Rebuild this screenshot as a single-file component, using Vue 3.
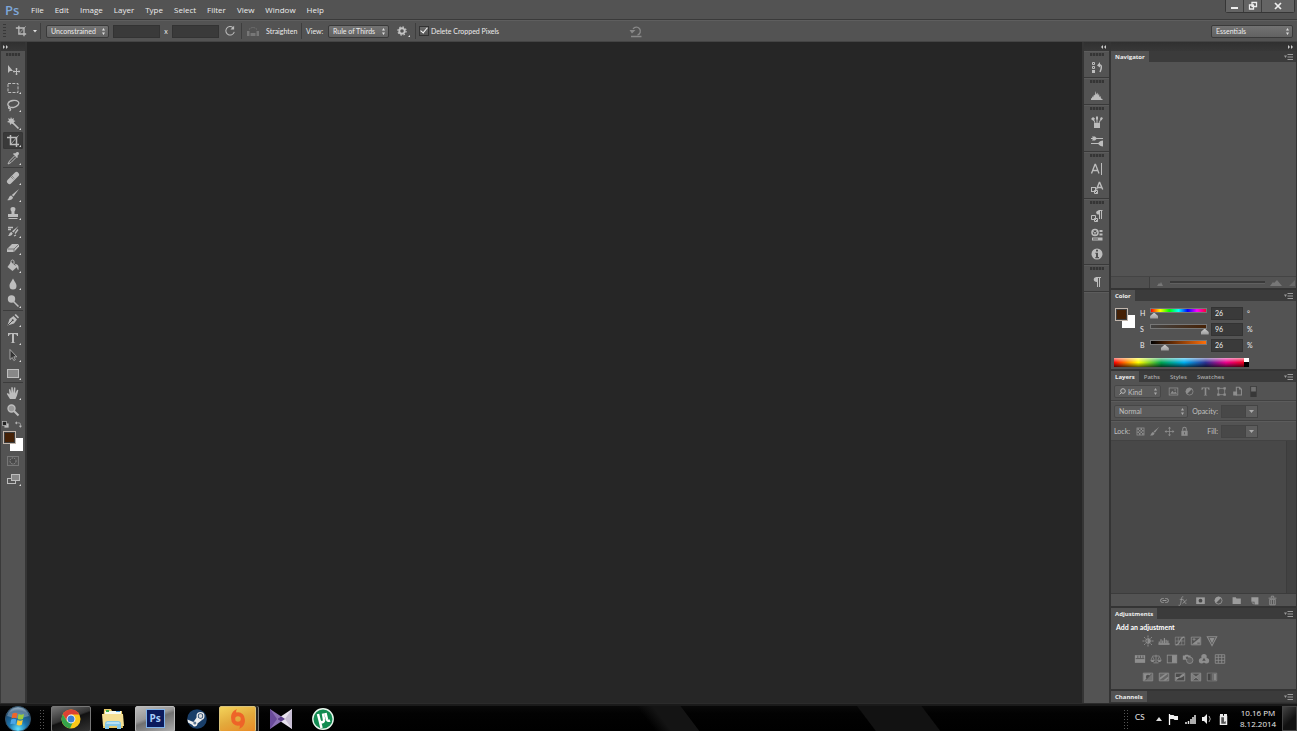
<script setup>
import { ref } from 'vue'

const menus = ['File', 'Edit', 'Image', 'Layer', 'Type', 'Select', 'Filter', 'View', 'Window', 'Help']

const icons = {
  move: '<path d="M2 2v8l2-2h3z" fill="currentColor"/><path d="M10.500 5v7M7 8.500h7M9.500 6h2M9.500 11h2M8 7.500v2M13 7.500v2" stroke="currentColor" fill="none"/>',
  marquee: '<rect x="2" y="2.500" width="10" height="9" fill="none" stroke="currentColor" stroke-dasharray="3 1.300"/>',
  lasso: '<path d="M4 9C0 7 2 3 7 2.500s7 2 5 4.500-6 3-8 2c-1.500-.8-2 1.200-.5 1.500S5 12 3.500 13" fill="none" stroke="currentColor" stroke-width="1.300"/>',
  wand: '<path d="M5 1l1 2 2-1-.5 2.200L9.500 5 7.600 6.200 8 8.500 5.700 7.500 4 9l-.2-2.300L1 6l2-1.500L2 2.300l2.300.7z" fill="currentColor"/><path d="M6.500 6.500l6 6" stroke="currentColor" stroke-width="1.700"/>',
  crop: '<path d="M4.500 1v9.500H13M1 3.500h9.500V13" fill="none" stroke="currentColor" stroke-width="1.500"/><path d="M4.500 10.500l8-9" stroke="currentColor" stroke-width=".8"/>',
  dropper: '<path d="M9 2.500l1.500-1.300c2-.8 3 .8 2.200 2.300L11.300 5l.7 1-1 1-4-4 1-1z" fill="currentColor"/><path d="M8.500 5l-5 5-1.500 3 3-1.500 5-5" fill="none" stroke="currentColor"/>',
  heal: '<path d="M3.500 10.500l7-7" stroke="currentColor" stroke-width="5" stroke-linecap="round"/><path d="M6 5l3 3M5 6l3 3" stroke="#555" stroke-width=".8" stroke-dasharray="1 1"/>',
  brush: '<path d="M13 1L7.500 8.500 5.800 7z" fill="currentColor"/><path d="M5.200 7.500L7 9.200C6.500 12 4 12.500 1 12c2-.5 1.500-4 4.200-4.500z" fill="currentColor"/>',
  stamp: '<path d="M7 1c3.200 0 2.800 3 1.500 4.500V8H12v3H2V8h3.500V5.500C4.200 4 3.800 1 7 1zM2.500 12h9v1h-9z" fill="currentColor"/>',
  history: '<path d="M12.500 2L7.500 8.500 6 7.200zM5.500 8l1.200 1.200C6 11.500 4.500 12 2 12c1.500-1 1-3.500 3.500-4z" fill="currentColor"/><path d="M2 3.500h5M2 5.500h3M9 9.500l3-4M8 12l2-1" stroke="currentColor" stroke-width="1.300"/>',
  eraser: '<path d="M1 8l5-5h7v2.500L8 11H1z" fill="currentColor"/><path d="M1.500 8H8l5-5M8 8v3" stroke="#666" fill="none" stroke-width=".8"/>',
  bucket: '<path d="M5 3l6 5-4.500 4-5-4z" fill="currentColor"/><path d="M5 7V2.500c0-2 3-2 3 0V5" fill="none" stroke="currentColor"/><path d="M9 5c3 0 4 2 3.500 6-1.500 0-1-3-2.500-3z" fill="currentColor"/>',
  drop: '<path d="M7 1.500c2 4 3.500 5 3.500 7.500a3.500 3.500 0 0 1-7 0C3.500 6.500 5 5.500 7 1.500z" fill="currentColor"/>',
  dodge: '<circle cx="5.500" cy="5" r="3.700" fill="currentColor"/><path d="M7.500 7.500l5 5" stroke="currentColor" stroke-width="1.500"/>',
  pen: '<path d="M1.500 12.500L3.500 6l4-3 3.500 3.500-3 4zM8.500 2l1.300-1L13 4.200 12 5.500z" fill="currentColor"/><path d="M2 12l4-4" stroke="#444" stroke-width=".9"/><circle cx="6.700" cy="7.200" r="1" fill="#444"/>',
  type: '<path d="M2 2h10v3h-1c0-1.300-.7-2-3-2v8.200l1.500.8h-5L6 11.200V3c-2.300 0-3 .7-3 2H2z" fill="currentColor"/>',
  select: '<path d="M4 1.500v10l2.300-2 1.500 3 1.500-.8-1.500-2.900h3z" fill="#333" stroke="currentColor" stroke-width=".8"/>',
  rect: '<rect x="1.500" y="3.500" width="11" height="8" fill="#888" stroke="currentColor"/>',
  hand: '<path d="M4 13L1 8.200C.5 7 2 6.500 3.500 8.500L3 4c0-1.200 1.300-1.200 1.500 0L5.300 7V2c0-1.200 1.400-1.200 1.500 0l.4 5 .8-5c.2-1.200 1.500-1 1.400.2L9.200 7.500l1.600-3.200c.6-1 1.700-.5 1.400.5L11 9.500 9.500 13z" fill="currentColor"/>',
  zoom: '<circle cx="5.500" cy="5.500" r="3.500" fill="#999" stroke="currentColor" stroke-width="1.400"/><path d="M8 8l4.500 4.500" stroke="currentColor" stroke-width="2"/>',
  mini: '<rect x="5" y="5" width="6" height="6" fill="#bbb"/><rect x="2" y="2" width="6" height="6" fill="#222" stroke="#bbb"/>',
  swap: '<path d="M4 4.500h4q2 0 2 2V10" fill="none" stroke="currentColor"/><path d="M1.500 4.500l3-2.500v5zM7.500 9h5L10 12z" fill="currentColor"/>',
  mask: '<rect x="1.500" y="2.500" width="11" height="9" fill="none" stroke="#777"/><circle cx="7" cy="7" r="3" fill="#4a4a4a" stroke="#929292" stroke-dasharray="1.500 1"/>',
  screen: '<rect x="1.500" y="6.500" width="8" height="5" fill="#555" stroke="currentColor"/><rect x="5.500" y="2.500" width="8" height="6" fill="#888" stroke="currentColor"/>',
  rotate: '<path d="M10.500 3A5 5 0 1 0 12 8" fill="none" stroke="currentColor" stroke-width="1.200"/><path d="M11.800.8v4.400H7.500z" fill="currentColor"/>',
  level: '<path d="M1 7h2.500v5H1zM10.500 7H13v5h-2.500zM4.500 9h5v3h-5z" fill="#777"/><path d="M3 5.500q4-4 8 0" stroke="#777" fill="none" stroke-dasharray="1.500 1"/>',
  gear: '<circle cx="7" cy="7" r="3.200" fill="none" stroke="currentColor" stroke-width="2.200"/><circle cx="7" cy="7" r="4.800" fill="none" stroke="currentColor" stroke-width="1.400" stroke-dasharray="1.800 1.970"/>',
  undo: '<path d="M4 5a4 4 0 1 1 4.500 6M2 12.500h10.500" fill="none" stroke="currentColor" stroke-width="1.300"/><path d="M.5 6h6L3 9.500z" fill="currentColor"/>',
  histPanel: '<path d="M2.500 1.500h2v2h-2zM2.500 5.500h2v2h-2z" fill="none" stroke="currentColor"/><path d="M2 9h3v3H2z" fill="currentColor"/><path d="M8.500 4c3.500-1 3.500 3 1.500 7" fill="none" stroke="currentColor" stroke-width="1.500"/><path d="M7 4.500L10 1v5.500z" fill="currentColor"/>',
  histogram: '<path d="M1 12v-1.500L2 10V8l1 1.500 1-3 1 1 .5-4.500 1 3.500 1-2 .5 3 1-2 .5 3.500 1-1 .5 2.500 1.500.5V12z" fill="currentColor"/>',
  brushes: '<path d="M4 8h6v5H4z" fill="currentColor"/><path d="M5 8L3 3M7 8V3M9 8l2-4" stroke="currentColor"/><path d="M1 4l2-2 2 1.500L3.500 6zM6 1.500h2v3H6zM10 4l1-2 2 1-1.500 2.500z" fill="currentColor"/>',
  brushPre: '<path d="M1 4.500h12M1 9.500h12" stroke="currentColor"/><path d="M2 2.500h3l2 2-2 2H2l1-2zM8 9.500c1-2 3-3 5-3v6c-2 0-4-1-5-3z" fill="currentColor"/>',
  char: '<path d="M1.500 11.500L5 2.500h.5l3.500 9M3 8.500h4.700" fill="none" stroke="currentColor" stroke-width="1.300"/><path d="M11.500 1v12" stroke="currentColor" stroke-width="1"/>',
  charStyle: '<path d="M6.500 8.500L9.300 1.500h.4l3 7M7.500 6.500h4" fill="none" stroke="currentColor" stroke-width="1.400"/><rect x="1.500" y="6.500" width="4" height="4" fill="none" stroke="currentColor"/><path d="M4.500 9.500h3v3h-3v-3l3 3" fill="none" stroke="currentColor"/>',
  paraStyle: '<path d="M8.500 1.500h4M9.500 2v8M11.500 2v8" stroke="currentColor"/><path d="M9.500 1.500c-4.500-.5-4.500 4.500 0 4z" fill="currentColor"/><path d="M1.500 6.500h4v4h-4zM4.500 9.500h3v3h-3v-3l3 3" fill="none" stroke="currentColor"/>',
  library: '<circle cx="5" cy="4.500" r="3" fill="none" stroke="currentColor" stroke-width="1.500"/><path d="M5 4v3M3 3.500l2 1 2-1" stroke="currentColor"/><path d="M9.500 2h3v2h-3zM9.500 5.500h3v2h-3z" fill="currentColor"/><rect x="2" y="9.500" width="10.500" height="3" fill="currentColor"/><path d="M3 11h5" stroke="#555"/>',
  info: '<circle cx="7" cy="7" r="5.500" fill="currentColor"/><path d="M6 2.800h2v1.800H6zM5.300 5.700H8v4.400h1v1.100H5.300v-1.100H6V6.800h-.7z" fill="#505050"/>',
  para: '<path d="M6 2.500h5M7.500 2v10M9.500 2v10" stroke="currentColor"/><path d="M7.500 2c-5-.5-5 5.500 0 5z" fill="currentColor"/>',
  image: '<rect x="1.500" y="2.500" width="11" height="9" fill="none" stroke="currentColor"/><path d="M3 10l2.500-4 2 2.500 2-1.500 2 3z" fill="currentColor"/><circle cx="9" cy="5" r="1" fill="currentColor"/>',
  half: '<circle cx="7" cy="7" r="4.500" fill="none" stroke="currentColor"/><path d="M3.800 10.200a4.500 4.500 0 0 1 6.400-6.400z" fill="currentColor"/>',
  shape: '<path d="M3 3h8v8H3z" fill="none" stroke="currentColor"/><path d="M1.500 1.500h3v3h-3zM9.500 1.500h3v3h-3zM1.500 9.500h3v3h-3zM9.500 9.500h3v3h-3z" fill="currentColor"/>',
  smart: '<path d="M5.500 1.500h4l2.500 2.500v7.500H5.500z" fill="none" stroke="currentColor" stroke-width="1.300"/><path d="M9 1v3.500h3.500zM1.500 7h5v5h-5z" fill="currentColor"/>',
  toggle: '<rect x="3" y="0" width="8" height="14" fill="#383838"/><rect x="4" y="1" width="6" height="6" fill="#707070"/>',
  pixels: '<rect x="2.500" y="2.500" width="9" height="9" fill="none" stroke="currentColor"/><path d="M3 3h2v2H3zM7 3h2v2H7zM5 5h2v2H5zM9 5h2v2H9zM3 7h2v2H3zM7 7h2v2H7zM5 9h2v2H5zM9 9h2v2H9z" fill="currentColor"/>',
  cross: '<path d="M7 2v10M2 7h10" stroke="currentColor"/><path d="M7 .8l2 2.400H5zM7 13.200l2-2.400H5zM.8 7l2.400-2v4zM13.200 7l-2.400-2v4z" fill="currentColor"/>',
  lock: '<rect x="3" y="6" width="8" height="6.500" fill="currentColor"/><path d="M4.700 6V4a2.300 2.300 0 0 1 4.600 0v2" fill="none" stroke="currentColor" stroke-width="1.300"/><path d="M7 8v2.500" stroke="#505050"/>',
  link: '<path d="M6 9.500H4.500a2.300 2.300 0 0 1 0-5H6M8 4.500h1.500a2.300 2.300 0 0 1 0 5H8M4.500 7h5" fill="none" stroke="currentColor" stroke-width="1.200"/>',
  fx: '<path d="M2 13c2 1 2.500-1 3-4l.8-4.500c.4-2 1-2.700 2.200-2.200M3.500 5.500H8M7.500 6.500c2-1 2 5.500 4.500 4M12.500 6L7 11" fill="none" stroke="currentColor"/>',
  maskIcon: '<path d="M1.500 3h11v8.500h-11z" fill="currentColor"/><circle cx="7" cy="7.200" r="2.400" fill="#484848"/>',
  folder: '<path d="M2 3h4l1 1.500h5.500v7H2z" fill="currentColor"/>',
  page: '<path d="M3 3h9v9H7V8.500H3z" fill="currentColor"/><path d="M3 9.500h3V12z" fill="currentColor"/>',
  trash: '<path d="M3.500 5.500h7v7h-7zM2 4h10M5.500 3.500v-2h3v2M5.500 6v6M8.500 6v6" fill="none" stroke="currentColor"/>',
  sun: '<circle cx="7" cy="7" r="2.500" fill="none" stroke="currentColor" stroke-width="1.200"/><path d="M7 4.500a2.500 2.500 0 0 1 0 5zM7 .5v2.500M7 11v2.500M.5 7H3M11 7h2.500M2.400 2.400l1.700 1.700M9.900 9.900l1.700 1.700M11.600 2.400L9.900 4.100M4.100 9.900l-1.700 1.700" fill="currentColor" stroke="currentColor" stroke-width="1.100"/>',
  levels: '<path d="M.5 11.500h13v-2h-13z" fill="currentColor"/><path d="M1.500 10V7.500M3.500 10V5M5.500 10V6.500M7.500 10V3.500M9.500 10V5.500M11.500 10V6.500" stroke="currentColor" stroke-width="1.400"/>',
  curves: '<path d="M1.500 2.500h11v9h-11zM5 2.500v9M9 2.500v9M1.500 7h11" fill="none" stroke="currentColor" stroke-width=".7"/><path d="M2 11.500c6 0 4-9 10-9" fill="none" stroke="currentColor" stroke-width="1.300"/>',
  exposure: '<path d="M1.500 2.500h11v9h-11z" fill="none" stroke="currentColor"/><path d="M2 11L12 3v8z" fill="currentColor"/><path d="M3 5h3.500M4.700 3.300v3.500" stroke="currentColor"/><path d="M8.500 9.500h3" stroke="#505050"/>',
  vibrance: '<path d="M1.500 2h11L7 12.500z" fill="none" stroke="currentColor" stroke-width="1.200"/><path d="M4 3.500h6L7 9.500z" fill="currentColor"/>',
  hue: '<path d="M1 2.500h12v9H1z" fill="currentColor"/><path d="M2 6.500h10M4.500 3v3M7.500 3v3M10.500 3v3" stroke="#555"/>',
  balance: '<path d="M7 2v9M3 3.500h8M4 11.500h6" stroke="currentColor"/><path d="M3 4L1 8.500h4zM11 4L9 8.500h4z" fill="none" stroke="currentColor" stroke-width=".8"/><path d="M.5 8.500h5L4 10.500H2zM8.500 8.500h5l-1.500 2h-2z" fill="currentColor"/>',
  bw: '<rect x="1.500" y="2.500" width="11" height="9" fill="none" stroke="currentColor"/><path d="M7 2.500h5.500v9H7z" fill="currentColor"/>',
  photo: '<path d="M1 3h2l1-1h3l1 1h2v5H1z" fill="currentColor"/><circle cx="9" cy="8.500" r="3.800" fill="#626262" stroke="currentColor"/><circle cx="6" cy="5.500" r="1.500" fill="#555"/>',
  mixer: '<circle cx="7" cy="4.500" r="3.200" fill="currentColor"/><circle cx="4.200" cy="9" r="3.200" fill="currentColor"/><circle cx="9.800" cy="9" r="3.200" fill="currentColor"/><path d="M7 5.500L9 9H5z" fill="#505050"/>',
  grid: '<path d="M1.500 2h11v10h-11zM5 2v10M9 2v10M1.500 5h11M1.500 8.500h11" fill="none" stroke="currentColor"/>',
  invert: '<path d="M1.500 2.500h11v9h-11z" fill="none" stroke="currentColor"/><path d="M2 3h9L3 11H2z" fill="currentColor"/><circle cx="7" cy="7" r="2.500" fill="#505050"/><path d="M12 11.500H4L12 3z" fill="currentColor" opacity=".55"/>',
  poster: '<path d="M1.500 2.500h11v9h-11z" fill="#666" stroke="currentColor"/><path d="M2 8l7-5h3L2 10.500zM6 11l6-4.500V9l-3 2z" fill="currentColor"/>',
  thresh: '<path d="M1.500 2.500h11v9h-11z" fill="#4b4b4b" stroke="currentColor"/><path d="M2 7h4l3-3 3-1v2.500L8 8H6l-4 3z" fill="currentColor"/>',
  selColor: '<path d="M1.500 2.500h11v9h-11z" fill="none" stroke="currentColor"/><path d="M1.500 2.500L7 7l5.500-4.500v9L7 7l-5.500 4.500z" fill="currentColor" opacity=".7"/><path d="M2 3l10 8.500M12 3L2 11.500" stroke="currentColor"/>',
  gradMap: '<path d="M1.500 2.500h11v9h-11z" fill="#444" stroke="currentColor" stroke-width=".8"/><path d="M5 3h2v8H5z" fill="#5a5a5a"/><path d="M7 3h2v8H7z" fill="#707070"/><path d="M9 3h3v8H9z" fill="#888"/>',
}

const toolGroups = [
  { cls: 'six', tools: [['move', 'Move'], ['marquee', 'Marquee'], ['lasso', 'Lasso'], ['wand', 'Magic wand'], ['crop', 'Crop'], ['dropper', 'Eyedropper']] },
  { cls: 'eight', tools: [['heal', 'Healing brush'], ['brush', 'Brush'], ['stamp', 'Clone stamp'], ['history', 'History brush'], ['eraser', 'Eraser'], ['bucket', 'Paint bucket'], ['drop', 'Blur'], ['dodge', 'Dodge']] },
  { cls: 'four', tools: [['pen', 'Pen'], ['type', 'Type'], ['select', 'Path selection'], ['rect', 'Rectangle']] },
  { cls: 'two', tools: [['hand', 'Hand'], ['zoom', 'Zoom']] },
]
const noFlyout = ['move', 'zoom']
const activeTool = ref('crop')

const tray = [['histPanel'], ['histogram'], ['brushes', 'brushPre'], ['char', 'charStyle'], ['paraStyle', 'library', 'info'], ['para']]

const deleteCropped = ref(true)
const channels = ref([
  { id: 'h', label: 'H', max: 360, value: 26, unit: '°' },
  { id: 's', label: 'S', max: 100, value: 96, unit: '%' },
  { id: 'b', label: 'B', max: 100, value: 26, unit: '%' },
])
const layerTabs = ['Layers', 'Paths', 'Styles', 'Swatches']
const filters = ['image', 'half', 'type', 'shape', 'smart', 'toggle']
const locks = ['pixels', 'brush', 'cross', 'lock']
const layerActions = ['link', 'fx', 'maskIcon', 'half', 'folder', 'page', 'trash']
const adjustments = [
  ['sun', 'levels', 'curves', 'exposure', 'vibrance'],
  ['hue', 'balance', 'bw', 'photo', 'mixer', 'grid'],
  ['invert', 'poster', 'thresh', 'selColor', 'gradMap'],
]
</script>

<template>
  <div class="app">
    <header class="menubar">
      <span class="logo">Ps</span>
      <nav class="menus">
        <button v-for="m in menus" :key="m" class="menu">{{ m }}</button>
      </nav>
      <div class="window-buttons">
        <button aria-label="Minimize"><svg width="10" height="10"><path d="M1 6h7v2H1z" fill="#eee" /></svg></button>
        <button aria-label="Restore"><svg width="10" height="10"><path d="M4 1.500h4.500v4H4zM1.500 4h4v4h-4z" fill="#555" stroke="#eee" stroke-width="1.300" /></svg></button>
        <button class="close" aria-label="Close"><svg width="10" height="10"><path d="M2 2l6 6M8 2L2 8" stroke="#eee" stroke-width="1.700" /></svg></button>
      </div>
    </header>

    <section class="options">
      <span class="vgrip"></span>
      <button class="preset" aria-label="Crop presets">
        <svg width="12" height="12" viewBox="0 0 14 14" v-html="icons.crop"></svg>
        <svg width="4" height="3"><path d="M0 0h4L2 2.500z" fill="#ddd" /></svg>
      </button>
      <i class="sep"></i>
      <span class="dropdown ratio">
        <select aria-label="Aspect ratio"><option>Unconstrained</option></select>
        <svg width="5" height="7"><path d="M1 2.500L2.500 0 4 2.500zM1 4.500L2.500 7 4 4.500z" fill="#ddd" /></svg>
      </span>
      <input class="field" type="text" aria-label="Width" />
      <span class="times">x</span>
      <input class="field" type="text" aria-label="Height" />
      <button class="rotate" aria-label="Rotate"><svg width="12" height="12" viewBox="0 0 14 14" v-html="icons.rotate"></svg></button>
      <i class="sep"></i>
      <button class="straighten"><svg width="14" height="14" v-html="icons.level"></svg><span>Straighten</span></button>
      <i class="sep"></i>
      <label class="view" for="overlay">View:</label>
      <span class="dropdown overlay">
        <select id="overlay"><option>Rule of Thirds</option></select>
        <svg width="5" height="7"><path d="M1 2.500L2.500 0 4 2.500zM1 4.500L2.500 7 4 4.500z" fill="#ddd" /></svg>
      </span>
      <button class="gear flyout" aria-label="Crop options"><svg width="12" height="12" viewBox="0 0 14 14" v-html="icons.gear"></svg></button>
      <i class="sep"></i>
      <label class="check"><input v-model="deleteCropped" type="checkbox" /><span>Delete Cropped Pixels</span></label>
      <button class="undo" aria-label="Reset"><svg width="14" height="14" v-html="icons.undo"></svg></button>
      <span class="dropdown workspace">
        <select aria-label="Workspace"><option>Essentials</option></select>
        <svg width="5" height="7"><path d="M1 2.500L2.500 0 4 2.500zM1 4.500L2.500 7 4 4.500z" fill="#ddd" /></svg>
      </span>
    </section>

    <main class="workspace-area">
      <aside class="toolbar">
        <div class="strip left"><svg width="6" height="4"><path d="M0 0l2 2-2 2zM3 0l2 2-2 2z" fill="#ccc" /></svg></div>
        <span class="grip"></span>
        <div v-for="g in toolGroups" :key="g.cls" class="tools" :class="g.cls">
          <button
            v-for="[id, name] in g.tools"
            :key="id"
            class="tool"
            :class="{ active: activeTool === id, flyout: !noFlyout.includes(id) }"
            :aria-label="name"
            @click="activeTool = id"
          ><svg width="14" height="14" v-html="icons[id]"></svg></button>
        </div>
        <div class="mini-row">
          <button aria-label="Default colors"><svg width="9" height="9" viewBox="0 0 13 13" v-html="icons.mini"></svg></button>
          <button aria-label="Swap colors"><svg width="9" height="9" viewBox="0 0 14 14" v-html="icons.swap"></svg></button>
        </div>
        <div class="swatches"><i class="back"></i><i class="front"></i></div>
        <button class="tool mode" aria-label="Quick mask"><svg width="14" height="14" v-html="icons.mask"></svg></button>
        <button class="tool mode flyout" aria-label="Screen mode"><svg width="14" height="14" v-html="icons.screen"></svg></button>
      </aside>

      <div class="canvas"></div>

      <aside class="tray">
        <div class="strip"><svg width="6" height="4"><path d="M2 0v4L0 2zM5 0v4L3 2z" fill="#ccc" /></svg></div>
        <div v-for="(s, i) in tray" :key="i" class="tray-section" :class="{ multi: s.length > 1 }">
          <span class="grip"></span>
          <button v-for="t in s" :key="t" :aria-label="t"><svg width="14" height="14" v-html="icons[t]"></svg></button>
        </div>
        <div class="tray-rest"></div>
      </aside>

      <aside class="panels">
        <div class="strip"><svg width="6" height="4"><path d="M0 0l2 2-2 2zM3 0l2 2-2 2z" fill="#ccc" /></svg></div>

        <section class="panel navigator">
          <div class="tabs"><button class="tab on">Navigator</button><button class="panel-menu" aria-label="Navigator menu"><svg width="9" height="6"><path d="M0 1.500h3L1.500 4zM3.500 0H9v1H3.500zM3.500 2.500H9v1H3.500zM3.500 5H9v1H3.500z" fill="#999" /></svg></button></div>
          <div class="nav-view"></div>
          <div class="nav-foot">
            <span class="percent"></span>
            <svg width="10" height="8"><path d="M2 7l2-3 1 1 1-2 2 4z" fill="#777" /></svg>
            <i class="nav-track"></i>
            <svg width="12" height="8"><path d="M0 7l3-4 1 1 3-3 5 6z" fill="#777" /></svg>
            <svg class="corner" width="7" height="8"><path d="M6 1v6H0zM1 7l5-6" fill="#696969" /></svg>
          </div>
        </section>

        <section class="panel">
          <div class="tabs"><button class="tab on">Color</button><button class="panel-menu" aria-label="Color menu"><svg width="9" height="6"><path d="M0 1.500h3L1.500 4zM3.500 0H9v1H3.500zM3.500 2.500H9v1H3.500zM3.500 5H9v1H3.500z" fill="#999" /></svg></button></div>
          <div class="color-body">
            <div class="swatches"><i class="back"></i><i class="front"></i></div>
            <div class="channels">
              <div v-for="c in channels" :key="c.id" class="channel">
                <label :for="'range-' + c.id">{{ c.label }}</label>
                <span class="ramp" :class="c.id"><input :id="'range-' + c.id" v-model="c.value" type="range" min="0" :max="c.max" /></span>
                <input v-model="c.value" class="num" type="text" :aria-label="c.label + ' value'" />
                <span class="unit">{{ c.unit }}</span>
              </div>
            </div>
            <div class="spectrum"><i></i></div>
          </div>
        </section>

        <section class="panel layers">
          <div class="tabs">
            <button v-for="(t, i) in layerTabs" :key="t" class="tab" :class="{ on: i === 0 }">{{ t }}</button>
            <button class="panel-menu" aria-label="Layers menu"><svg width="9" height="6"><path d="M0 1.500h3L1.500 4zM3.500 0H9v1H3.500zM3.500 2.500H9v1H3.500zM3.500 5H9v1H3.500z" fill="#999" /></svg></button>
          </div>
          <div class="row">
            <span class="dropdown kind">
              <select aria-label="Filter by"><option>Kind</option></select>
              <svg class="lens" width="7" height="7"><circle cx="4" cy="3" r="2.300" fill="none" stroke="#bbb" /><path d="M2.500 4.500L.5 6.500" stroke="#bbb" /></svg>
              <svg width="5" height="7"><path d="M1 2.500L2.500 0 4 2.500zM1 4.500L2.500 7 4 4.500z" fill="#aaa" /></svg>
            </span>
            <button v-for="f in filters" :key="f" class="small filter" :aria-label="f"><svg width="11" height="11" viewBox="0 0 14 14" v-html="icons[f]"></svg></button>
          </div>
          <div class="row">
            <span class="dropdown blend">
              <select aria-label="Blend mode"><option>Normal</option></select>
              <svg width="5" height="7"><path d="M1 2.500L2.500 0 4 2.500zM1 4.500L2.500 7 4 4.500z" fill="#aaa" /></svg>
            </span>
            <label class="amount-label" for="opacity">Opacity:</label>
            <span class="amount"><input id="opacity" type="text" /><button aria-label="Opacity slider"><svg width="5" height="3"><path d="M0 0h5L2.500 3z" fill="#aaa" /></svg></button></span>
          </div>
          <div class="row">
            <span class="lock-label">Lock:</span>
            <button v-for="l in locks" :key="l" class="small" :aria-label="l"><svg width="11" height="11" viewBox="0 0 14 14" v-html="icons[l]"></svg></button>
            <label class="amount-label" for="fill">Fill:</label>
            <span class="amount"><input id="fill" type="text" /><button aria-label="Fill slider"><svg width="5" height="3"><path d="M0 0h5L2.500 3z" fill="#aaa" /></svg></button></span>
          </div>
          <div class="layer-list"><i></i></div>
          <div class="layer-foot">
            <button v-for="a in layerActions" :key="a" :aria-label="a"><svg width="11" height="11" viewBox="0 0 14 14" v-html="icons[a]"></svg></button>
          </div>
        </section>

        <section class="panel">
          <div class="tabs"><button class="tab on">Adjustments</button><button class="panel-menu" aria-label="Adjustments menu"><svg width="9" height="6"><path d="M0 1.500h3L1.500 4zM3.500 0H9v1H3.500zM3.500 2.500H9v1H3.500zM3.500 5H9v1H3.500z" fill="#999" /></svg></button></div>
          <div class="adjust-body">
            <h2>Add an adjustment</h2>
            <div v-for="(r, i) in adjustments" :key="i" class="adjust-row">
              <button v-for="a in r" :key="a" :aria-label="a"><svg width="12" height="12" viewBox="0 0 14 14" v-html="icons[a]"></svg></button>
            </div>
          </div>
        </section>

        <section class="panel channels-panel">
          <div class="tabs"><button class="tab on">Channels</button><button class="panel-menu" aria-label="Channels menu"><svg width="9" height="6"><path d="M0 1.500h3L1.500 4zM3.500 0H9v1H3.500zM3.500 2.500H9v1H3.500zM3.500 5H9v1H3.500z" fill="#999" /></svg></button></div>
        </section>
      </aside>
    </main>

    <footer class="taskbar">
      <button class="start" aria-label="Start">
        <svg width="26" height="26" viewBox="0 0 26 26">
          <defs>
            <radialGradient id="orb" cx=".5" cy=".9" r=".9"><stop offset="0" stop-color="#5fe0ff" /><stop offset=".4" stop-color="#1b74ad" /><stop offset=".8" stop-color="#1b4a73" /><stop offset="1" stop-color="#8fa9bd" /></radialGradient>
          </defs>
          <circle cx="13" cy="13" r="12.500" fill="url(#orb)" stroke="#34536b" />
          <path d="M2 10a11.500 11.500 0 0 1 22 0q-11 4-22 0z" fill="#fff" opacity=".28" />
          <path d="M7.500 7.500q3-1.500 5 0l-1 5q-2.500-1.300-5 0z" fill="#f0652a" />
          <path d="M13.500 8q2.500 1.300 5.500 0l-1 5q-3 1.200-5.300 0z" fill="#9ccc3c" />
          <path d="M6.200 13.500q2.500-1.300 5.100 0l-1 4.800q-2.300-1.300-5 0z" fill="#4aa6e8" />
          <path d="M12.500 14q2.500 1.300 5.300 0l-1 4.800q-2.700 1.300-5.200 0z" fill="#fdcb35" />
        </svg>
      </button>
      <span class="dots"></span>
      <button class="task open" aria-label="Chrome">
        <svg width="20" height="20" viewBox="0 0 20 20">
          <circle cx="10" cy="10" r="9.500" fill="#fbc818" />
          <path d="M1.800 5.200A9.500 9.500 0 0 1 18.300 5.500H10L6 12z" fill="#dd4233" />
          <path d="M1.800 5.200L6 12.300l5.500 1.800-2.500 5.300A9.500 9.500 0 0 1 1.800 5.200z" fill="#35a34b" />
          <circle cx="10" cy="10" r="4.400" fill="#fff" /><circle cx="10" cy="10" r="3.500" fill="#3d80d0" />
        </svg>
      </button>
      <button class="task" aria-label="Explorer">
        <svg width="24" height="22" viewBox="0 0 24 22">
          <path d="M3 1h7l1 2h10l1 17H2z" fill="#e7c968" /><path d="M4 3h16v6H4z" fill="#f7fbef" /><path d="M5 2h3v2H5z" fill="#44b04b" /><path d="M15 3h4v1h-4z" fill="#469be0" />
          <path d="M1 6h21l1 12H2z" fill="#f4df93" /><path d="M4 21v-5q0-3 3-3h10q3 0 3 3v5h-4v-3H8v3z" fill="#83c7e8" /><path d="M6 14h12l1 2H5z" fill="#b8e1f3" />
        </svg>
      </button>
      <button class="task open current" aria-label="Photoshop"><span class="ps-icon">Ps</span></button>
      <button class="task" aria-label="Steam">
        <svg width="20" height="20" viewBox="0 0 20 20"><circle cx="10" cy="10" r="9.800" fill="#193e68" /><path d="M.4 10.500l6 2.500L10 8l5 3-4.500 3.500c0 3.500-4 4-5 1.500L1 13.500z" fill="#eee" /><circle cx="13.500" cy="7" r="4" fill="#eee" /><circle cx="13.500" cy="7" r="2.700" fill="#28496e" /><circle cx="13.500" cy="7" r="1.900" fill="#ddd" /><circle cx="7.800" cy="14" r="1.500" fill="#5d7793" /></svg>
      </button>
      <button class="task open origin" aria-label="Origin">
        <svg width="18" height="22" viewBox="0 0 18 22"><circle cx="9" cy="11" r="4.800" fill="none" stroke="#ee6428" stroke-width="4" /><path d="M2.300 11C1.500 6 4 2.500 8 1 7 2.500 7 3.500 7.500 5zM15.700 11c.8 5-1.700 8.500-5.700 10 1-1.500 1-2.500.5-4z" fill="#ee6428" /></svg>
      </button>
      <button class="task" aria-label="Media player">
        <svg width="24" height="20" viewBox="0 0 24 20"><path d="M1 0l15 10L1 20z" fill="#8c71b4" /><path d="M1 0l7 10-7 10z" fill="#694a9a" /><path d="M23 0L8 10l15 10z" fill="#e8e2ee" /><path d="M23 0v20l-7-10z" fill="#c8bed4" /><path d="M12 7.300l4 2.700-4 2.700L8 10z" fill="#5b3d8a" /></svg>
      </button>
      <button class="task" aria-label="µTorrent">
        <svg width="22" height="22" viewBox="0 0 22 22"><circle cx="11" cy="11" r="10.200" fill="#128b51" stroke="#e8f5ec" stroke-width="1.400" /><path d="M6 6l1.500 6c.8 3.500 5.200 2.500 4.500-.5L11 5.500M13.500 5l1.500 6.500c.4 1.500 1.800 1.500 3 1M7.500 12l2 8" fill="none" stroke="#fff" stroke-width="2.500" /></svg>
      </button>

      <span class="dots tray-dots"></span>
      <span class="lang">CS</span>
      <div class="status">
        <svg width="6" height="4"><path d="M0 4h6L3 0z" fill="#ddd" /></svg>
        <svg width="11" height="12"><path d="M1.500 1v11" stroke="#fff" stroke-width="1.300" /><path d="M2 2h3.500l1 1H10v4H6.500l-1-1H2z" fill="#eee" /></svg>
        <svg width="11" height="12"><path d="M1 11V9M3.500 11V8M6 11V6M8 11V4M10 11V2" stroke="#e8e8e8" stroke-width="1.500" /></svg>
        <svg width="11" height="12"><path d="M1 4h2l3-3v10L3 8H1z" fill="#eee" /><path d="M8 3q2.500 3 0 6" stroke="#aaa" fill="none" /></svg>
        <svg width="11" height="12"><path d="M2.500 3.500h6v8h-6z" fill="#555" stroke="#eee" stroke-width="1.500" /><path d="M2 1h3v2H2zM6 1h3v2H6zM6 4h3l-1 4-2 1z" fill="#eee" /></svg>
      </div>
      <div class="clock"><span>10.16 PM</span><span>8.12.2014</span></div>
      <button class="desktop" aria-label="Show desktop"></button>
    </footer>
  </div>
</template>

<style>
html, body, #app { height: 100%; margin: 0; background: #000; overflow: hidden; }
</style>

<style scoped>
.app {
  display: flex;
  flex-direction: column;
  height: 100vh;
  font-family: Lato, "Open Sans", sans-serif;
  font-size: 7px;
  line-height: 10px;
  color: #ececec;
}
button, input, select { font: inherit; color: inherit; margin: 0; padding: 0; border: 0; background: none; border-radius: 0; outline: none; box-sizing: border-box; }
button { display: flex; align-items: center; justify-content: center; }
svg { display: block; flex: none; }
i { display: block; flex: none; }

.menubar { display: flex; flex: none; height: 19px; background: #535353; border-bottom: 1px solid #3a3a3a; align-items: center; }
.logo { width: 26px; padding-left: 5px; box-sizing: border-box; font: 600 13px/18px "Open Sans", sans-serif; color: #7ea7d8; }
.menus { display: flex; }
.menu { height: 18px; padding: 0 6px 0 5px; font: 8px/12px "Open Sans", sans-serif; color: #ececec; }
.window-buttons { display: flex; align-self: flex-start; margin-left: auto; margin-right: 2px; border: 1px solid #363636; border-top: 0; border-radius: 0 0 3px 3px; }
.window-buttons button { width: 18px; height: 12px; background: #646464; border-right: 1px solid #3d3d3d; }
.window-buttons .close { width: 32px; border-right: 0; }

.options { display: flex; flex: none; height: 22px; align-items: center; background: #535353; border-top: 1px solid #5e5e5e; box-sizing: border-box; border-bottom: 1px solid #444; }
.vgrip { width: 3px; height: 14px; margin: 0 9px 0 3px; background: repeating-linear-gradient(#383838 0 1px, #535353 1px 3px); }
.preset { gap: 6px; width: 25px; color: #bbb; justify-content: flex-start; }
.sep { width: 1px; height: 16px; background: #3e3e3e; }
.dropdown { display: grid; grid-template-columns: 1fr 5px; padding-right: 2px; align-items: center; height: 13px; border: 1px solid #3a3a3a; border-radius: 2px; box-sizing: border-box; background: linear-gradient(#727272, #626262); }
.dropdown select { grid-area: 1 / 1 / 2 / 3; width: 100%; height: 11px; padding-left: 4px; appearance: none; }
.dropdown > svg { grid-area: 1 / 2; }
.ratio { width: 63px; margin: 0 4px 0 5px; }
.field { width: 47px; height: 13px; background: #3a3a3a; border: 1px solid #333; }
.times { width: 12px; text-align: center; }
.rotate { width: 22px; color: #bbb; }
.straighten { gap: 6px; width: 59px; padding-left: 4px; justify-content: flex-start; }
.view { width: 22px; margin-left: 4px; }
.overlay { width: 61px; }
.gear { width: 26px; height: 16px; color: #c4c4c4; }
.check { display: flex; align-items: center; gap: 2px; width: 78px; margin-left: 3px; white-space: nowrap; }
.check input { flex: none; appearance: none; width: 10px; height: 10px; border: 1px solid #333; background: #5f5f5f; }
.check input:checked { background: linear-gradient(#6a6a6a, #555); position: relative; }
.check input:checked::after { content: ""; position: absolute; left: 2px; top: -1px; width: 3px; height: 6px; border: solid #fff; border-width: 0 1px 1px 0; transform: rotate(40deg); }
.undo { margin-left: 132px; color: #888; }
.workspace { width: 82px; margin-left: auto; margin-right: 4px; }

.workspace-area { display: flex; flex: 1; min-height: 0; background: #303030; border-bottom: 1px solid #2b2b2b; }
.strip { display: flex; flex: none; align-items: center; justify-content: flex-end; height: 9px; padding-right: 2px; background: linear-gradient(#303030, #383838); }
.strip.left { justify-content: flex-start; padding-left: 2px; }
.grip { flex: none; height: 3px; width: 14px; margin: 2px auto; background: repeating-linear-gradient(90deg, #353535 0 2px, #484848 2px 3px); }

.toolbar { display: flex; flex-direction: column; flex: none; width: 26px; border-left: 1px solid #3a3a3a; border-right: 1px solid #353535; box-sizing: border-box; background: #535353; }
.tools { display: flex; flex-direction: column; margin: 0 2px; border-bottom: 1px solid #3c3c3c; }
.tools.six { height: 106px; margin-top: 3px; }
.tools.eight { height: 141px; margin-top: 1px; }
.tools.four { height: 71px; }
.tools.two { height: 35px; margin-top: 1px; border-bottom: 0; }
.tool { flex: 1; min-height: 0; color: #bdbdbd; }
.tool.active { background: #3a3a3a; border-radius: 2px; box-shadow: inset 0 0 1px #222; }
.flyout { position: relative; }
.flyout::after { content: ""; position: absolute; right: 2px; bottom: 2px; border: 1px solid #ddd; border-left-color: transparent; border-top-color: transparent; }
.gear::after { right: 5px; bottom: 2px; }
.mini-row { display: flex; justify-content: space-between; height: 11px; padding: 0 2px 0 0; align-items: center; color: #bbb; }
.swatches { position: relative; flex: none; width: 20px; height: 20px; }
.toolbar .swatches { margin: 1px 0 0 2px; }
.swatches i { position: absolute; box-sizing: border-box; width: 13px; height: 13px; }
.swatches .front { left: 0; top: 0; background: #452106; border: 1px solid #c2b6ac; outline: 1px solid #3b3b3b; outline-offset: -2px; }
.swatches .back { right: 0; bottom: 0; background: #fff; }
.mode { flex: none; height: 18px; margin: 0 2px; }
.swatches + .mode { margin-top: 1px; }

.canvas { flex: 1; min-width: 0; background: #262626; border-left: 1px solid #353535; }

.tray { display: flex; flex-direction: column; flex: none; width: 27px; border-left: 2px solid #353535; box-sizing: border-box; background: #535353; }
.tray-section { border-bottom: 1px solid #393939; border-top: 1px solid #5c5c5c; }
.tray-section .grip { display: block; margin: 1px auto 2px; }
.tray-section button { width: 100%; height: 19px; color: #bdbdbd; }
.tray-section.multi { padding-bottom: 1px; }
.tray-rest { flex: 1; border-top: 1px solid #5c5c5c; }

.panels { display: flex; flex-direction: column; flex: none; width: 188px; padding: 0 1px 1px 2px; box-sizing: border-box; background: #343434; }
.panel { display: flex; flex-direction: column; flex: none; margin-bottom: 2px; background: #535353; }
.tabs { display: flex; flex: none; height: 11px; background: #3b3b3b; }
.tab { padding: 0 4px; margin-right: 1px; color: #a9a9a9; font: 600 6px/10px "Open Sans", sans-serif; }
.tab + .tab { padding: 0 5px 0 4px; }
.tab.on { background: #535353; color: #eee; font-weight: 700; }
.panel-menu { margin-left: auto; margin-right: 3px; }
.navigator { height: 237px; }
.nav-view { flex: 1; }
.nav-foot { display: flex; align-items: center; height: 11px; border-top: 1px solid #444; gap: 5px; }
.percent { width: 38px; height: 11px; border-right: 1px solid #3e3e3e; background: #4f4f4f; }
.nav-track { flex: 1; height: 2px; background: #3a3a3a; border-bottom: 1px solid #606060; }
.corner { margin-left: 2px; }

.color-body { padding: 4px 0 1px; display: grid; grid-template-columns: 25px 1fr; }
.color-body .swatches { margin: 3px 0 0 4px; }
.channel { display: flex; align-items: center; height: 16px; padding-left: 4px; }
.channel label { width: 10px; }
.channels { display: flex; flex-direction: column; }
.ramp { display: block; width: 57px; height: 5px; margin-bottom: 6px; border: 1px solid #777; box-sizing: border-box; }
.ramp.h { background: linear-gradient(90deg, #f00, #ff0, #0f0, #0ff, #00f, #f0f, #f03); }
.ramp.s { background: linear-gradient(90deg, #444, #452106); }
.ramp.b { background: linear-gradient(90deg, #000, #ff6f0a); }
.ramp input { display: block; appearance: none; width: 65px; height: 8px; margin: 3px -5px 0; }
.ramp input::-webkit-slider-thumb { appearance: none; width: 8px; height: 6px; background: linear-gradient(#ccc, #999); clip-path: polygon(50% 0, 100% 60%, 100% 100%, 0 100%, 0 60%); }
.num { width: 32px; height: 13px; margin: 0 4px; padding-left: 3px; background: #3a3a3a; border: 1px solid #333; }
.spectrum { grid-column: 1 / 3; display: flex; justify-content: flex-end; width: 135px; height: 9px; margin: 5px 0 1px 3px; background: linear-gradient(rgba(255,255,255,.6), transparent 50%, rgba(0,0,0,.65)), linear-gradient(90deg, #f00, #ff0 18%, #00a651 35%, #00aeef 52%, #2e3192 68%, #ec008c 83%, #e00); }
.spectrum i { width: 5px; background: linear-gradient(#fff 50%, #000 50%); }

.layers { flex: 1; min-height: 0; color: #c0c0c0; }
.row { display: flex; align-items: center; flex: none; height: 19px; box-sizing: border-box; padding: 1px 0 0 3px; border-bottom: 1px solid #424242; }
.row + .row { height: 20px; padding-top: 0; border-top: 1px solid #5c5c5c; }
.row .dropdown { background: #5c5c5c; border-color: #474747; }
.kind { width: 47px; margin-right: 4px; }
.kind select { padding-left: 13px; }
.kind .lens { grid-area: 1 / 1; margin-left: 4px; }
.small { width: 15px; color: #8e8e8e; }
.filter { width: 16px; }
.blend { width: 74px; }
.amount-label { width: 30px; margin-left: auto; text-align: right; padding-right: 3px; box-sizing: border-box; }
.amount { display: flex; width: 37px; height: 13px; margin-right: 38px; border: 1px solid #444; box-sizing: border-box; }
.amount input { flex: 1; min-width: 0; background: #484848; }
.amount button { width: 12px; background: #5e5e5e; border-left: 1px solid #444; }
.lock-label { width: 19px; }
.layer-list { display: flex; justify-content: flex-end; flex: 1; min-height: 0; background: #484848; }
.layer-list i { width: 10px; background: #424242; border-left: 1px solid #3c3c3c; box-sizing: border-box; }
.layer-foot { display: flex; align-items: center; justify-content: flex-end; gap: 7px; height: 13px; padding-right: 18px; box-sizing: border-box; border-top: 1px solid #3c3c3c; color: #9c9c9c; }

.adjust-body { height: 70px; padding: 3px 5px 0; box-sizing: border-box; color: #8e8e8e; }
.adjust-body h2 { margin: 0; font-size: 7px; line-height: 10px; font-weight: 700; color: #fff; }
.adjust-row { display: flex; width: 128px; justify-content: center; height: 18px; align-items: center; }
.adjust-row button { width: 16px; }
.channels-panel { margin-bottom: 0; }

.taskbar {
  display: flex; flex: none; align-items: center; height: 27px; border-top: 2px solid #1a1a1a; box-sizing: border-box;
  background:
    linear-gradient(53deg, transparent 25%, #141414 40%, #141414 65%, transparent 66%) 52% 0 / 90px 100% no-repeat,
    linear-gradient(53deg, transparent 25%, #121212 26%, #121212 75%, transparent 76%) 71% 0 / 110px 100% no-repeat,
    linear-gradient(#080808, #020202 30%, #000);
}
.start { width: 36px; height: 25px; }
.dots { width: 6px; height: 20px; margin: 0 6px 0 3px; background: radial-gradient(circle, #555 0 1px, transparent 1px) 0 0 / 3px 3px; }
.task { width: 40px; height: 27px; margin-right: 2px; }
.task.open { width: 40px; height: 26px; border: 1px solid #777; border-radius: 2px; background: linear-gradient(160deg, #777, #333 45%, #111 50%, #333); }
.task.current { border-color: #bbb; background: linear-gradient(160deg, #bbb, #999 40%, #707070 50%, #aaa); }
.task.origin { width: 37px; margin-right: 5px; border-color: #d9c27a; background: linear-gradient(160deg, #f3d35a, #e3aa3c 50%, #e88a26); box-shadow: 2px 0 #222, 3px 0 #777; }
.ps-icon { width: 17px; height: 17px; border: 1px solid #7fb2ea; background: #0b1a5c; color: #a9cdf8; font: bold 10px/16px "Open Sans", sans-serif; }
.tray-dots { margin-left: auto; }
.lang { width: 21px; font-size: 8px; padding-bottom: 3px; }
.status { display: flex; align-items: center; width: 73px; justify-content: space-between; margin-right: 10px; }
.clock { display: flex; flex-direction: column; align-items: center; width: 38px; padding-bottom: 2px; font: 8px/11px "Open Sans", sans-serif; white-space: nowrap; margin-right: 5px; }
.desktop { width: 15px; height: 25px; border: 1px solid #444; background: linear-gradient(135deg, #444, #111 60%); }
</style>
